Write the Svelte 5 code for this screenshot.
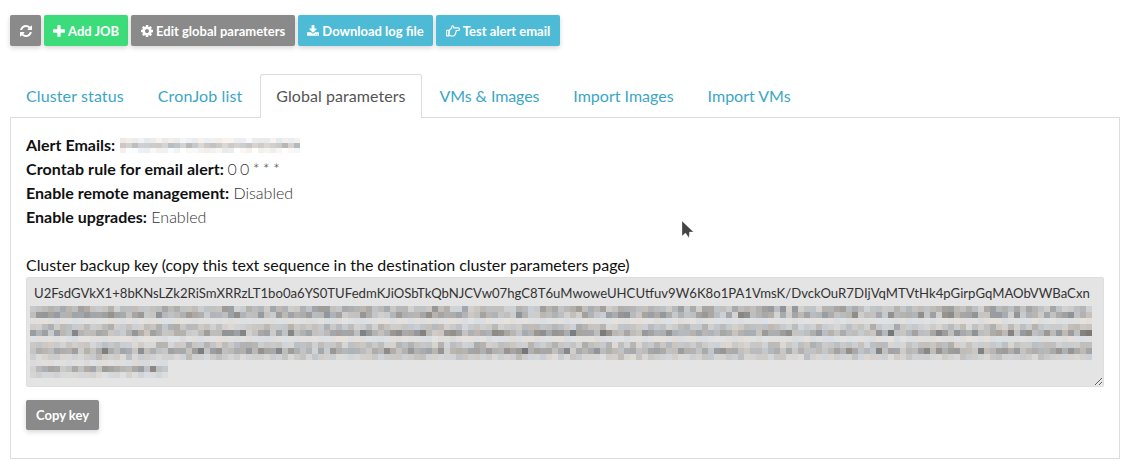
<script>
  const keyStart = 'U2FsdGVkX1+8bKNsLZk2RiSmXRRzLT1bo0a6YS0TUFedmKJiOSbTkQbNJCVw07hgC8T6uMwoweUHCUtfuv9W6K8o1PA1VmsK/DvckOuR7DIjVqMTVtHk4pGirpGqMAObVWBaCxn';

  const tabs = ['Cluster status', 'CronJob list', 'Global parameters', 'VMs & Images', 'Import Images', 'Import VMs'];

  // seeded so the smudged out text looks the same on every load
  let seed = 7;
  function rnd() {
    seed = (seed * 16807) % 2147483647;
    return seed / 2147483647;
  }

  function tint(strength) {
    const base = 228 - strength * (45 + rnd() * 55);
    const warm = (rnd() - 0.5) * 11;
    return `rgb(${base + warm | 0},${base | 0},${base - warm | 0})`;
  }

  function smudge(rows, width, height) {
    const cells = [];
    rows.forEach(([y, to, strength]) => {
      for (let x = 0; x < to; x += width) {
        cells.push({ x, y, w: width, h: height, fill: tint(strength * (0.4 + rnd() * 0.8)) });
      }
    });
    return cells;
  }

  // one smudged line of text is a few rows of blocks, fading out underneath
  const keyCells = smudge([
    [0, 1062, 0.7], [6, 1062, 0.85], [12, 1062, 0.06],
    [18, 1062, 0.5], [24, 1062, 0.95], [30, 1062, 0.08],
    [36, 1062, 0.5], [42, 1062, 0.95], [48, 1062, 0.35],
    [54, 135, 0.12], [60, 135, 0.9], [66, 138, 0.2]
  ], 6, 6);

  const emailCells = smudge([
    [0, 180, -0.2], [5, 180, 0.45], [10, 180, -0.3]
  ], 6, 5);
</script>

<div class="page">
  <div class="toolbar">
    <button class="btn grey icon-only" aria-label="Refresh">
      <svg class="ic" viewBox="0 0 1536 1536"><path d="M1511 928q0 5-1 7-64 268-268 434.500t-478 166.500q-146 0-282.500-55t-243.500-157l-129 129q-19 19-45 19t-45-19-19-45v-448q0-26 19-45t45-19h448q26 0 45 19t19 45-19 45l-137 137q71 66 161 102t187 36q134 0 250-65t186-179q11-17 53-117 8-23 30-23h192q13 0 22.500 9.500t9.500 22.500zm25-800v448q0 26-19 45t-45 19h-448q-26 0-45-19t-19-45 19-45l138-138q-148-137-349-137-134 0-250 65t-186 179q-11 17-53 117-8 23-30 23h-199q-13 0-22.500-9.500t-9.500-22.500v-7q65-268 270-434.500t480-166.500q146 0 284 55.500t245 156.500l130-129q19-19 45-19t45 19 19 45z"/></svg>
    </button>
    <button class="btn green narrow">
      <svg class="ic" viewBox="0 0 1408 1408"><path d="M1408 608v192q0 40-28 68t-68 28h-416v416q0 40-28 68t-68 28h-192q-40 0-68-28t-28-68v-416h-416q-40 0-68-28t-28-68v-192q0-40 28-68t68-28h416v-416q0-40 28-68t68-28h192q40 0 68 28t28 68v416h416q40 0 68 28t28 68z"/></svg>
      Add JOB
    </button>
    <button class="btn grey">
      <svg class="ic" viewBox="0 0 1536 1536"><path d="M1024 768q0-106-75-181t-181-75-181 75-75 181 75 181 181 75 181-75 75-181zm512-109v222q0 12-8 23t-20 13l-185 28q-19 54-39 91 35 50 107 138 10 12 10 25t-9 23q-27 37-99 108t-94 71q-12 0-26-9l-138-108q-44 23-91 38-16 136-29 186-7 28-36 28h-222q-14 0-24.500-8.500t-11.500-21.500l-28-184q-49-16-90-37l-141 107q-10 9-25 9-14 0-25-11-126-114-165-168-7-10-7-23 0-12 8-23 15-21 51-66.500t54-70.500q-27-50-41-99l-183-27q-13-2-21-12.500t-8-23.500v-222q0-12 8-23t19-13l186-28q14-46 39-92-40-57-107-138-10-12-10-24 0-10 9-23 26-36 98.500-107.500t94.500-71.500q13 0 26 10l138 107q44-23 91-38 16-136 29-186 7-28 36-28h222q14 0 24.500 8.500t11.500 21.500l28 184q49 16 90 37l142-107q9-9 24-9 13 0 25 10 129 119 165 170 7 8 7 22 0 12-8 23-15 21-51 66.500t-54 70.500q26 50 41 98l183 28q13 2 21 12.500t8 23.500z"/></svg>
      Edit global parameters
    </button>
    <button class="btn blue narrow">
      <svg class="ic" viewBox="64 128 1664 1472"><path d="M1344 1344q0-26-19-45t-45-19-45 19-19 45 19 45 45 19 45-19 19-45zm256 0q0-26-19-45t-45-19-45 19-19 45 19 45 45 19 45-19 19-45zm128-224v320q0 40-28 68t-68 28h-1472q-40 0-68-28t-28-68v-320q0-40 28-68t68-28h465l135 136q58 56 136 56t136-56l136-136h464q40 0 68 28t28 68zm-325-569q17 41-14 70l-448 448q-18 19-45 19t-45-19l-448-448q-31-29-14-70 17-39 59-39h256v-448q0-26 19-45t45-19h256q26 0 45 19t19 45v448h256q42 0 59 39z"/></svg>
      Download log file
    </button>
    <button class="btn blue">
      <svg class="ic hand" viewBox="0 1 14 11.500" stroke="#fff" stroke-width="1.100" stroke-linejoin="round">
        <path d="M.6 6H3v5.600H.6z"/>
        <path d="M3 6.500l2.300-2.300.9-2.400c1.200-.6 1.800.5 1.400 1.800h4.700c1.500 0 1.500 2.600 0 2.600H10c.4 1 0 1.800-.4 2 .3.800-.2 1.600-.6 1.800 0 1.200-.6 1.800-1.500 1.800h-2c-1 0-1.700-.6-2.500-.8z"/>
      </svg>
      Test alert email
    </button>
  </div>

  <ul class="tabs">
    {#each tabs as tab, i}
      <li class:active={i === 2}>{tab}</li>
    {/each}
  </ul>

  <section class="panel">
    <div class="facts">
      <div class="fact">
        <b>Alert Emails:</b>
        <svg class="email" width="180" height="15" aria-hidden="true">
          {#each emailCells as c}
            <rect x={c.x} y={c.y} width={c.w} height={c.h} fill={c.fill} />
          {/each}
        </svg>
      </div>
      <div class="fact cron"><b>Crontab rule for email alert:</b> 0 0 * * *</div>
      <div class="fact"><b>Enable remote management:</b> Disabled</div>
      <div class="fact"><b>Enable upgrades:</b> Enabled</div>
    </div>

    <label for="backup-key">Cluster backup key (copy this text sequence in the destination cluster parameters page)</label>
    <div class="key-wrap">
      <textarea id="backup-key" readonly value={keyStart}></textarea>
      <svg class="key-blur" width="1062" height="72" aria-hidden="true">
        {#each keyCells as c}
          <rect x={c.x} y={c.y} width={c.w} height={c.h} fill={c.fill} />
        {/each}
      </svg>
    </div>

    <button class="btn grey copy">Copy key</button>
  </section>

  <svg class="cursor" width="14" height="20" viewBox="0 0 14 20" aria-hidden="true">
    <path d="M1 1v15l3.500-3 3.500 5 .5-6h4z" fill="#444" stroke="#fff" stroke-opacity=".5" stroke-width=".6"/>
  </svg>
</div>

<style>
  :global(body) {
    margin: 0;
    background: #fff;
  }

  .page {
    position: relative;
    width: 1132px;
    height: 468px;
    box-sizing: border-box;
    padding: 15px 12px 0 10px;
    font-family: Lato, "Liberation Sans", sans-serif;
    font-size: 16px;
    line-height: 24px;
    color: #111;
    overflow: hidden;
  }

  .toolbar {
    display: flex;
    gap: 3px;
  }

  .btn {
    display: inline-flex;
    align-items: center;
    justify-content: center;
    gap: 3px;
    height: 31px;
    padding: 0 10px;
    border: 0;
    border-radius: 2px;
    font-family: inherit;
    font-size: 13px;
    font-weight: 700;
    color: #fff;
    box-shadow: 0 2px 5px rgba(0, 0, 0, 0.16);
    white-space: nowrap;
  }

  .icon-only {
    width: 31px;
    padding: 0;
  }

  .narrow {
    padding: 0 9px;
  }

  .grey { background: #8a8a8a; }
  .green { background: #3ddc7b; }
  .blue { background: #4ebbd6; }

  .ic {
    width: 12px;
    height: 12px;
    fill: #fff;
    flex: none;
  }

  .ic.hand {
    width: 14px;
    fill: none;
  }

  .tabs {
    display: flex;
    gap: 2px;
    list-style: none;
    margin: 28px 0 -1px;
    padding: 0;
    position: relative;
    z-index: 1;
  }

  .tabs li {
    padding: 9px 15px 10px;
    border: 1px solid transparent;
    border-bottom: 0;
    border-radius: 3px 3px 0 0;
    color: #3ba6c6;
    height: 24px;
  }

  /* the first tabs run a hair wider than the installed Lato */
  .tabs li:nth-child(-n+2) {
    letter-spacing: 0.12px;
  }

  .tabs li:nth-child(3) {
    letter-spacing: 0.06px;
  }

  .tabs li:nth-child(4) {
    letter-spacing: -0.1px;
  }

  .tabs li.active {
    color: #555;
    background: #fff;
    border-color: #ddd;
  }

  .panel {
    height: 342px;
    border: 1px solid #ddd;
    padding: 15px;
    box-sizing: border-box;
    display: flex;
    flex-direction: column;
    align-items: flex-start;
    background: #fff;
  }

  .fact {
    height: 24px;
    font-weight: 300;
    color: #333;
    white-space: pre-wrap;
  }

  .fact b {
    font-weight: 700;
    color: #111;
  }

  .cron {
    word-spacing: -1px;
  }

  .cron b {
    word-spacing: 0;
    letter-spacing: 0.08px;
  }

  .email {
    display: inline-block;
    vertical-align: -2px;
  }

  label {
    margin-top: 24px;
    font-weight: 400;
    line-height: 24px;
    letter-spacing: -0.047px;
  }

  .key-wrap {
    position: relative;
    width: 1078px;
    height: 110px;
  }

  textarea {
    display: block;
    width: 100%;
    height: 100%;
    box-sizing: border-box;
    margin: 0;
    padding: 6px 7px;
    border: 1px solid #dedede;
    border-radius: 2px;
    background: #e4e4e4;
    color: #333;
    font-family: inherit;
    font-size: 13.150px;
    line-height: 18px;
    outline: none;
    overflow: hidden;
  }

  .key-blur {
    position: absolute;
    left: 4px;
    top: 29px;
  }

  .copy {
    margin-top: 13px;
    height: 30px;
  }

  .cursor {
    position: absolute;
    left: 681px;
    top: 220px;
  }
</style>
